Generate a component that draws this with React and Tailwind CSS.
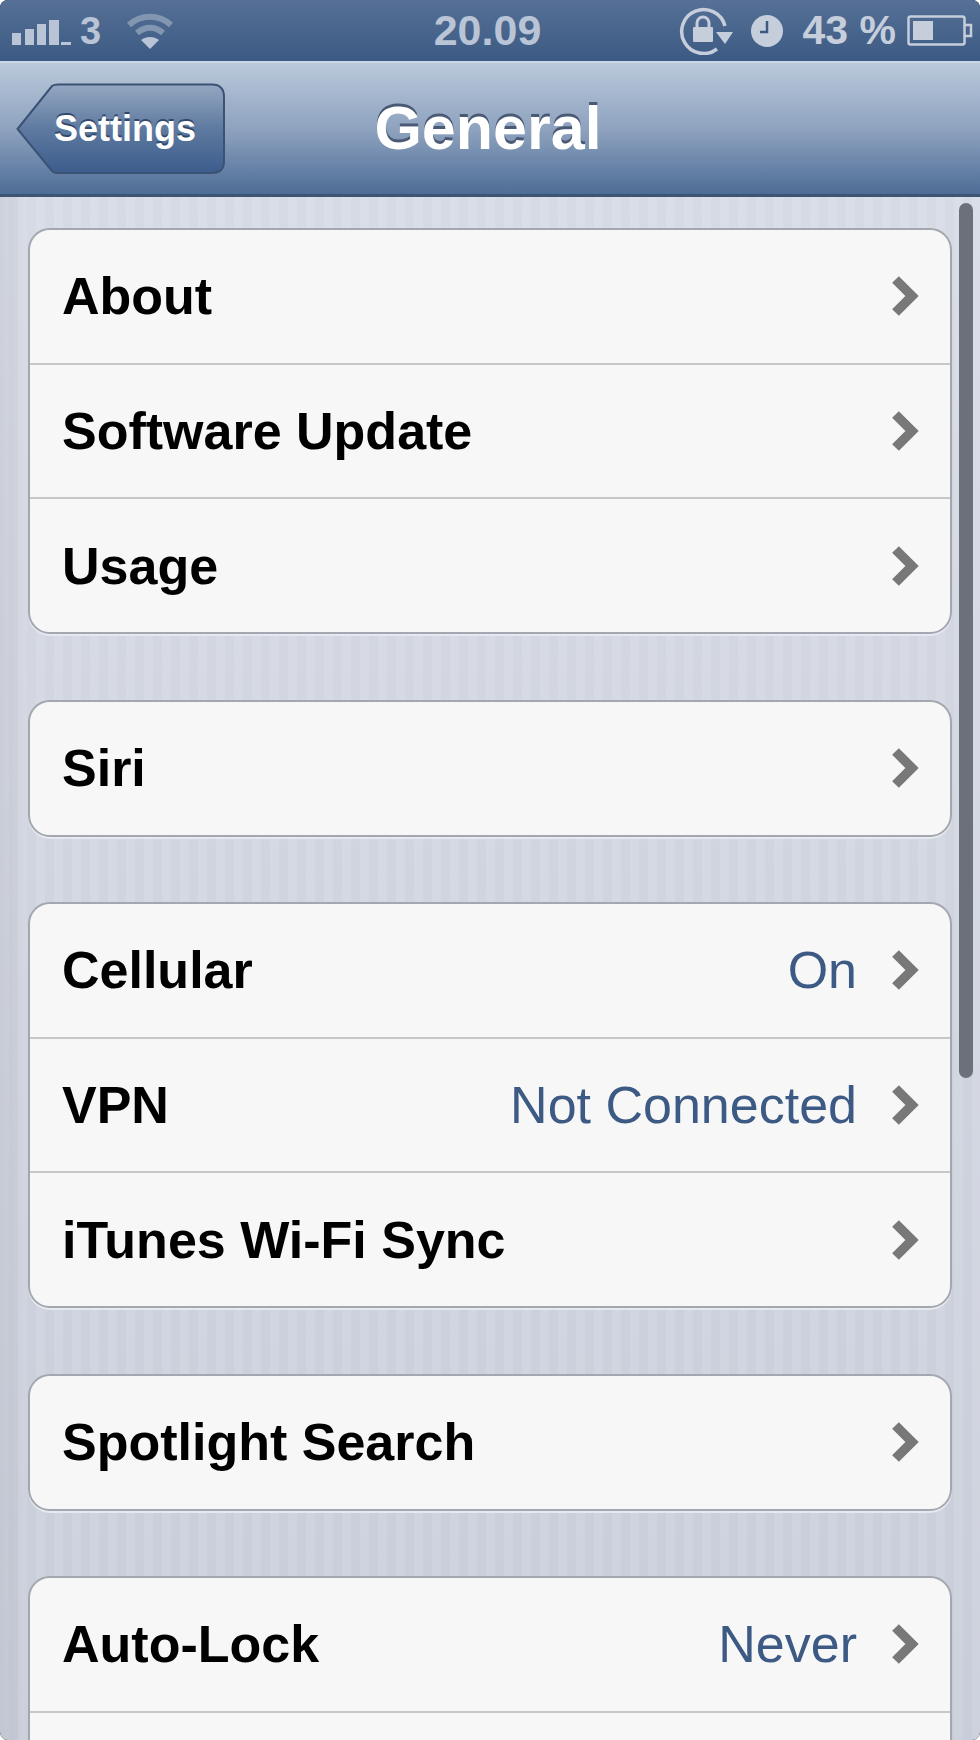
const groups = [
  [{ label: 'About' }, { label: 'Software Update' }, { label: 'Usage' }],
  [{ label: 'Siri' }],
  [{ label: 'Cellular', value: 'On' }, { label: 'VPN', value: 'Not Connected' }, { label: 'iTunes Wi-Fi Sync' }],
  [{ label: 'Spotlight Search' }],
  [{ label: 'Auto-Lock', value: 'Never' }, { label: '' }],
];

function Chevron() {
  return (
    <svg width="28" height="42" viewBox="0 0 28 42" className="shrink-0">
      <path d="M4.5 4.5 L21 21 L4.5 37.5" fill="none" stroke="#787878" strokeWidth="9.5" />
    </svg>
  );
}

function SignalBars() {
  return (
    <svg width="60" height="28" viewBox="0 0 60 28" fill="#b9c4d6">
      <rect x="0" y="16" width="9" height="12" />
      <rect x="13" y="12" width="9" height="16" />
      <rect x="25" y="7" width="9" height="21" />
      <rect x="37" y="3" width="10" height="25" />
      <rect x="49" y="25" width="10" height="3" />
    </svg>
  );
}

function Wifi() {
  return (
    <svg width="48" height="38" viewBox="0 0 48 38" fill="none" stroke="#8296b2" strokeWidth="6">
      <path d="M3 13 C15 2 33 2 45 13" />
      <path d="M11 21 C19 14 29 14 37 21" />
      <path d="M24 37 L15 28 C20 24 28 24 33 28 Z" fill="#b9c4d6" stroke="none" />
    </svg>
  );
}

function RotationLock() {
  return (
    <svg width="54" height="48" viewBox="0 0 54 48" fill="none">
      <path d="M46 19 A22 22 0 1 0 38 42" stroke="#c6cedc" strokeWidth="3.5" />
      <path d="M37 25 H54 L46 37 Z" fill="#c6cedc" />
      <rect x="14" y="20" width="20" height="15" rx="1" fill="#c6cedc" />
      <path d="M18 21 V16 A6 6 0 0 1 30 16 V21" stroke="#c6cedc" strokeWidth="3" />
    </svg>
  );
}

function Clock() {
  return (
    <svg width="32" height="32" viewBox="0 0 32 32">
      <circle cx="16" cy="16" r="16" fill="#c6cedc" />
      <path d="M16 6 V17 H9" fill="none" stroke="#3f5a80" strokeWidth="2.5" />
    </svg>
  );
}

function Battery() {
  return (
    <svg width="66" height="32" viewBox="0 0 66 32" fill="none">
      <rect x="1.5" y="1.5" width="56" height="28" rx="2" stroke="#c6cedc" strokeWidth="2.5" />
      <rect x="6" y="6" width="20" height="19" fill="#c6cedc" />
      <path d="M58 10 H64 V21 H58" stroke="#c6cedc" strokeWidth="2.5" />
    </svg>
  );
}

function BackShape() {
  return (
    <svg width="210" height="92" viewBox="0 0 210 92" className="absolute inset-0">
      <defs>
        <linearGradient id="back" x1="0" y1="0" x2="0" y2="1">
          <stop offset="0" stopColor="#95a7c1" />
          <stop offset="0.5" stopColor="#5e7aa0" />
          <stop offset="1" stopColor="#3c5c8c" />
        </linearGradient>
      </defs>
      <path
        d="M1.5 46 L36 3 Q38 1.5 42 1.5 H196 Q208 1.5 208 14 V78 Q208 90 196 90 H42 Q38 90 36 88 Z"
        fill="url(#back)"
        stroke="#3b5275"
        strokeWidth="2"
      />
    </svg>
  );
}

function Row({ label, value, last }) {
  return (
    <div className={`flex items-center pr-[31px] pl-[32px] ${last ? 'h-[133px]' : 'h-[134.5px] border-b-2 border-[#c6c7c9]'}`}>
      <span className="flex-1 text-[52px] font-bold text-black">{label}</span>
      {value && <span className="mr-[34px] text-[52px] text-[#3d5a85]">{value}</span>}
      {label && <Chevron />}
    </div>
  );
}

export default function App() {
  return (
    <div className="relative h-[1740px] w-[980px] overflow-hidden rounded-[8px] bg-black font-['Liberation_Sans',Arial,sans-serif]">
      {/* status bar */}
      <div className="grid h-[61px] grid-cols-[1fr_auto_1fr] items-center bg-gradient-to-b from-[#567096] to-[#3b5a83] pr-[7px] pl-[8px]">
        <div className="flex items-center pl-[4px] text-[38px] leading-none font-bold text-[#b9c4d6]">
          <SignalBars />
          <span className="ml-[8px]">3</span>
          <span className="ml-[25px]"><Wifi /></span>
        </div>
        <div className="mr-[6px] text-[43px] leading-none font-bold text-[#b9c4d6]">20.09</div>
        <div className="flex items-center justify-end text-[41px] leading-none font-bold text-[#c6cedc]">
          <RotationLock />
          <span className="ml-[18px]"><Clock /></span>
          <span className="ml-[20px] whitespace-pre">43 %</span>
          <span className="ml-[11px]"><Battery /></span>
        </div>
      </div>

      {/* nav bar */}
      <div className="grid h-[136px] grid-cols-[1fr_auto_1fr] items-center border-t-2 border-b-[3px] border-t-[#c8d6e6] border-b-[#3d5472] bg-gradient-to-b from-[#bac9db] via-[#8fa3bf] to-[#4e6d96] pr-[20px] pl-[16px]">
        <div className="relative flex h-[92px] w-[210px] items-center justify-center pl-[8px] text-[36px] font-bold text-white [text-shadow:0_-2px_0_#33496b]">
          <BackShape />
          <span className="relative">Settings</span>
        </div>
        <div className="text-[61px] font-bold text-white [text-shadow:0_-3px_0_#4a5a75]">General</div>
      </div>

      {/* list */}
      <div className="flex h-[1543px] flex-col gap-[65.5px] bg-[linear-gradient(90deg,#0000000f,#00000000_28px),repeating-linear-gradient(90deg,#ffffff0a_0px,#ffffff0a_9px,#00000004_9px,#00000004_18px),linear-gradient(180deg,#d9dde7,#cbd0dc)] pt-[31px] pr-[28px] pl-[28px]">
        {groups.map((rows, i) => (
          <div
            key={i}
            className="shrink-0 overflow-hidden rounded-[22px] border-2 border-[#a3a7af] bg-[#f7f7f7] shadow-[0_2px_0_#e6e9ef]"
          >
            {rows.map((r, j) => (
              <Row key={j} label={r.label} value={r.value} last={j === rows.length - 1} />
            ))}
          </div>
        ))}
      </div>

      {/* scroll indicator */}
      <div className="absolute top-[203px] left-[959px] h-[875px] w-[14px] rounded-full bg-[#6c707b]" />
    </div>
  );
}
